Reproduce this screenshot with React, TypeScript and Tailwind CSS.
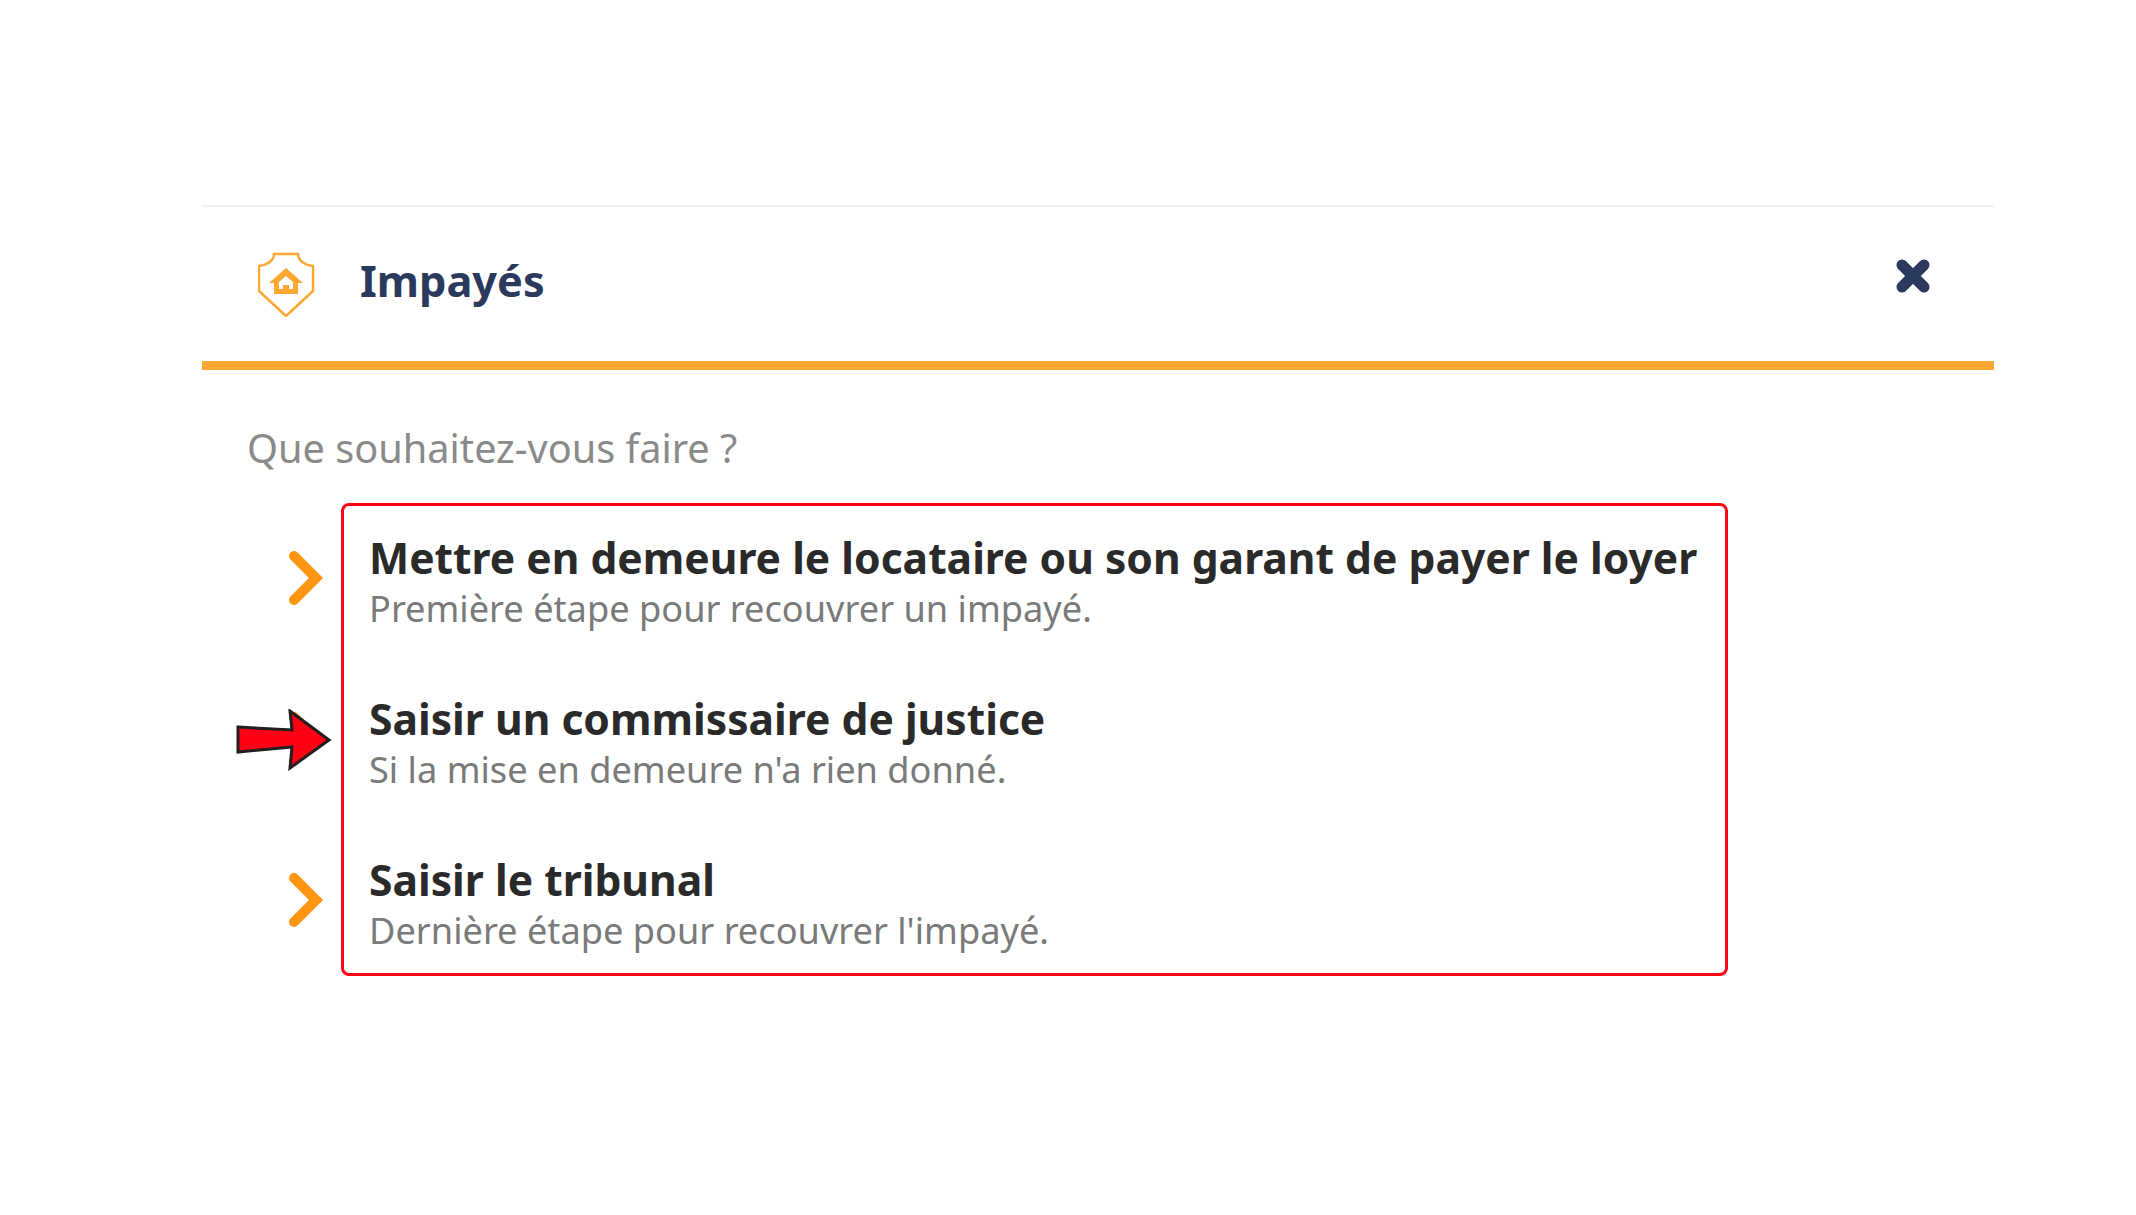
const rows = [
  { title: 'Mettre en demeure le locataire ou son garant de payer le loyer', sub: 'Première étape pour recouvrer un impayé.' },
  { title: 'Saisir un commissaire de justice', sub: "Si la mise en demeure n'a rien donné." },
  { title: 'Saisir le tribunal', sub: "Dernière étape pour recouvrer l'impayé." },
]

function Chevron() {
  return (
    <svg width="36" height="56" viewBox="0 0 36 56" fill="none" className="block">
      <path d="M6 6 L28 28 L6 50" stroke="#ff9510" strokeWidth="10" strokeLinecap="round" strokeLinejoin="miter" />
    </svg>
  )
}

function ShieldHome() {
  return (
    <svg width="58" height="66" viewBox="0 0 58 66" fill="none" className="block">
      <path
        d="M16 3 H40 C40 9 46 14 55 15 V40 L28 65 L1 40 V15 C10 14 16 9 16 3 Z"
        stroke="#ffa733"
        strokeWidth="2.5"
        strokeLinejoin="round"
      />
      <path d="M28 17 L45 32 H40 V43 H16 V32 H11 Z" fill="#ffa733" />
      <path d="M28 25 L35 31 V38 H31 V34 H25 V38 H21 V31 Z" fill="#fff" />
      <path d="M26 36 H30 V43 H26 Z" fill="#ffa733" />
    </svg>
  )
}

function RedArrow() {
  return (
    <svg width="96" height="62" viewBox="0 0 96 62" className="block">
      <path d="M2 18 L56 21 L54 2 L93 31 L54 59 L56 38 L2 43 Z" fill="#ff0014" stroke="#231f20" strokeWidth="3" />
    </svg>
  )
}

export default function App() {
  return (
    <main className="min-h-screen bg-white font-['Noto_Sans',sans-serif] pt-[205px] px-[142px]">
      <div className="w-[1792px] mx-[60px]">
        {/* Header */}
        <header className="border-t-2 border-[#f1f1f1] h-[165px] flex items-center pl-[56px] pr-[64px] border-b-[9px] border-b-[#ffa733]">
          <ShieldHome />
          <h1 className="ml-[44px] mb-[6px] text-[43.3px] font-bold text-[#2b3a5c] leading-none">Impayés</h1>
          <svg width="34" height="34" viewBox="0 0 34 34" className="ml-auto mb-[16px]">
            <path d="M6 6 L28 28 M28 6 L6 28" stroke="#2b3a5c" strokeWidth="11" strokeLinecap="round" />
          </svg>
        </header>

        <p className="mt-[55px] ml-[45px] text-[39.7px] leading-[46px] text-[#8a8a8a]">Que souhaitez-vous faire ?</p>

        <div className="relative mt-[32px] flex">
          {/* Chevrons */}
          <div className="ml-[86px] w-[53px] pt-[47px] flex flex-col gap-[105px]">
            {rows.map(r => (
              <Chevron key={r.title} />
            ))}
          </div>

          {/* Options */}
          <div className="w-[1387px] h-[473px] border-[3px] border-[#ff0014] rounded-[8px] pl-[25px] pt-[22px] flex flex-col gap-[61px]">
            {rows.map(r => (
              <div key={r.title} className="h-[100px]">
                <div className="text-[42.6px] leading-[59px] font-bold text-[#2a2a2a] whitespace-nowrap">{r.title}</div>
                <div className="text-[36.2px] leading-[42px] text-[#7a7a7a] whitespace-nowrap">{r.sub}</div>
              </div>
            ))}
          </div>

          <div className="absolute left-[34px] top-[206px]">
            <RedArrow />
          </div>
        </div>
      </div>
    </main>
  )
}
